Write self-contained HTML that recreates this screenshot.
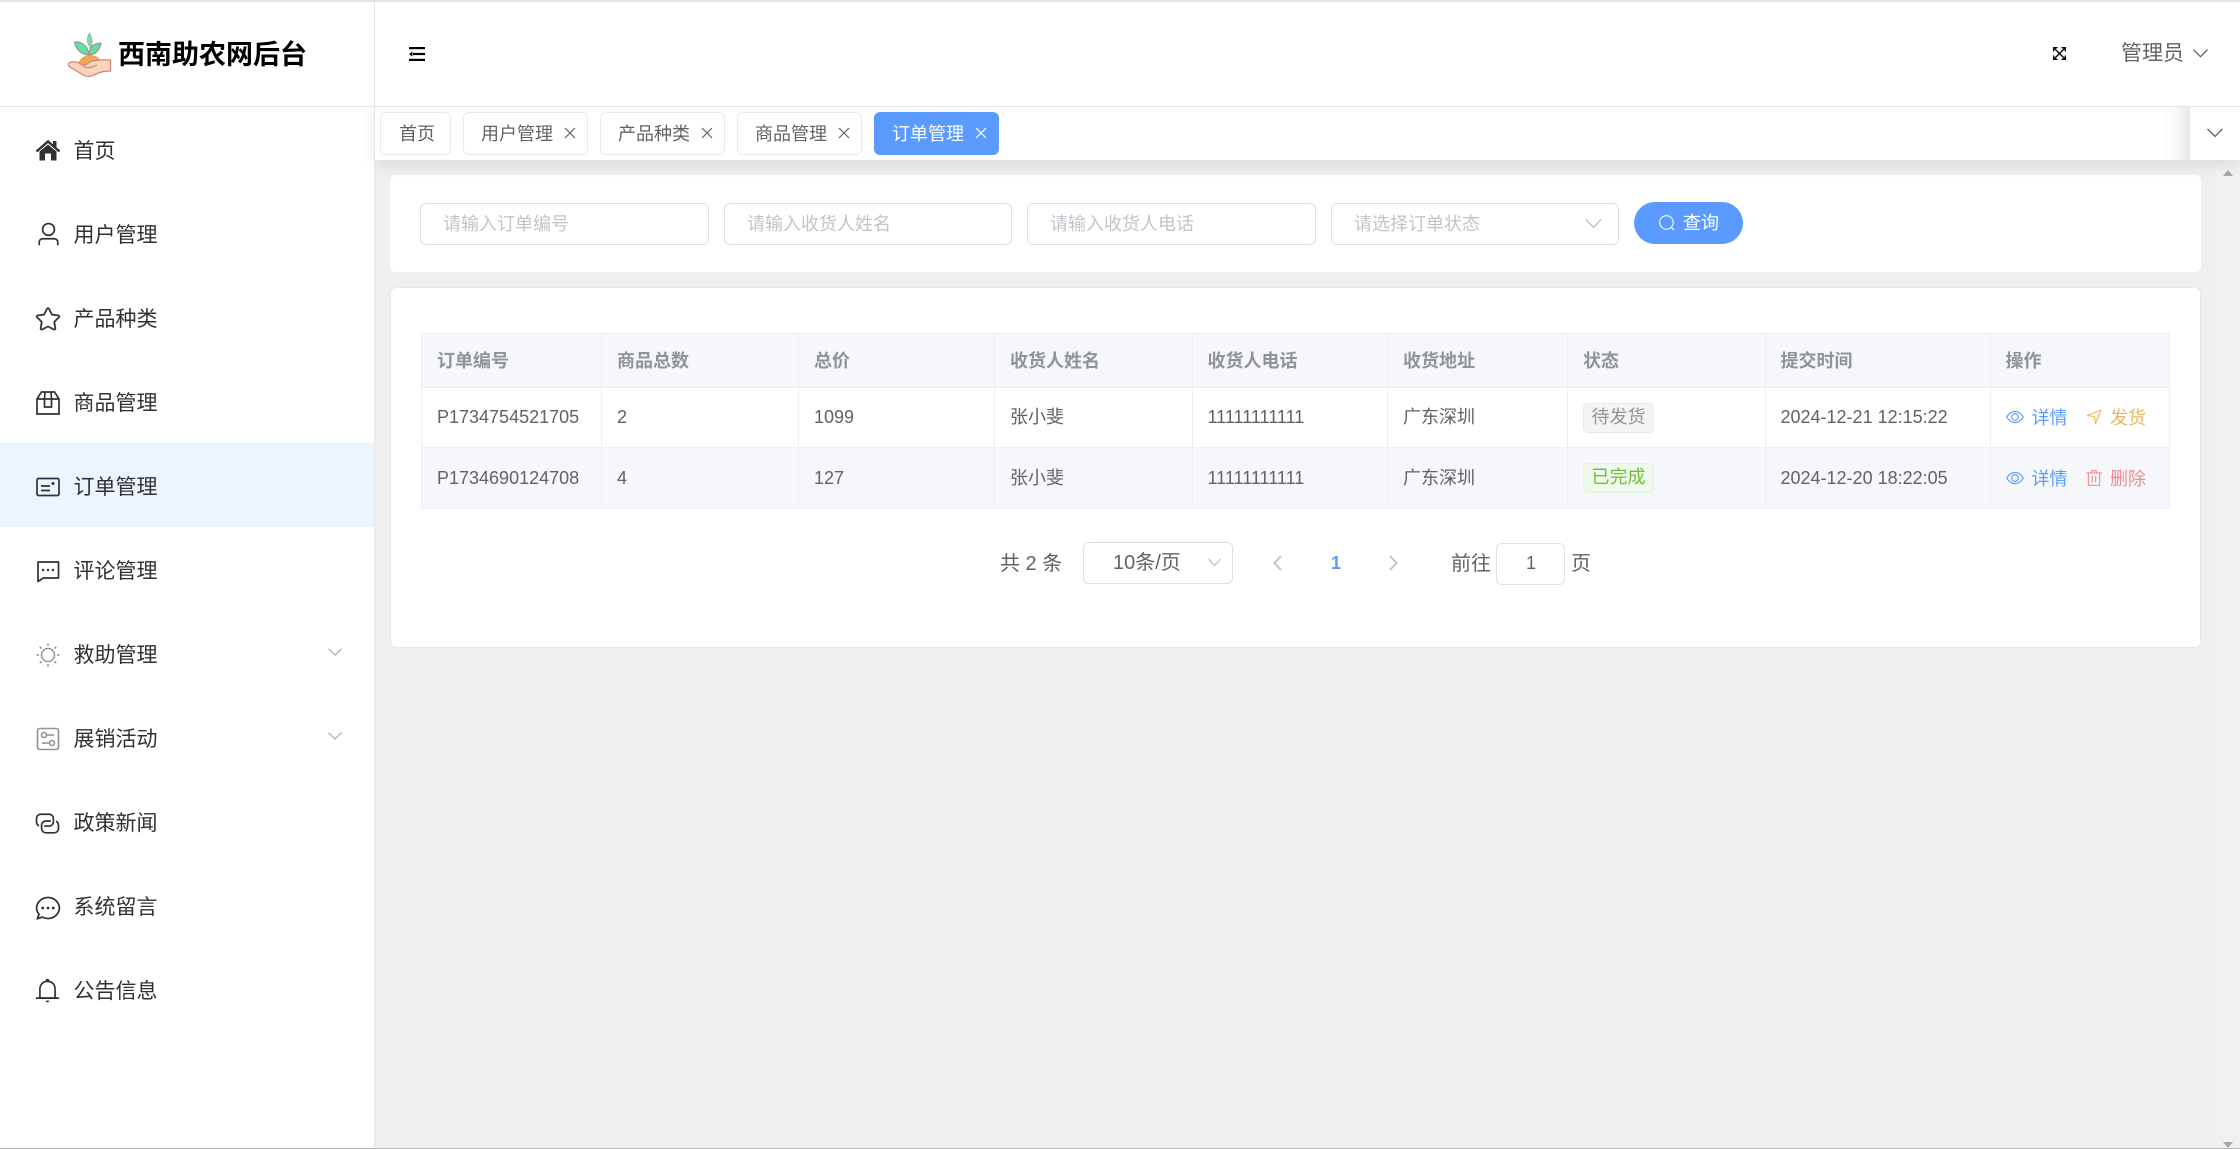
<!DOCTYPE html>
<html lang="zh-CN"><head><meta charset="utf-8"><title>西南助农网后台</title>
<style>
*{box-sizing:border-box;margin:0;padding:0}
html,body{width:2240px;height:1149px;overflow:hidden;background:#efefef}
body{position:relative;font-family:"Liberation Sans","Noto Sans CJK SC",sans-serif;color:#606266;font-size:18px}
.a{position:absolute}
.t{position:absolute;white-space:nowrap;line-height:30px;height:30px}
svg{position:absolute;display:block;overflow:visible}
.m{left:73.500px;font-size:21px;color:#303133}
.p{font-size:20px}
.tab{position:absolute;top:111.500px;height:43px;background:#fff;border:1px solid #e8eaef;border-radius:6px}
.tab span{position:absolute;left:17px;top:6px;line-height:30px;white-space:nowrap;color:#606266}
.inp{position:absolute;top:203px;height:42px;background:#fff;border:1px solid #dcdfe6;border-radius:6px}
.inp span{position:absolute;left:22px;top:5px;line-height:30px;color:#c0c4cc;white-space:nowrap}
table{position:absolute;left:421px;top:333px;width:1748px;border-collapse:collapse;table-layout:fixed;color:#606266}
td,th{border:1px solid #ebeef5;padding:0 0 0 15px;text-align:left;white-space:nowrap;font-size:18px;font-weight:400}
th{height:54px;background:#f5f7fa;color:#909399;font-weight:700;padding-bottom:2px}
.r1 td{height:60px;background:#fff}
.r2 td{height:61px;background:#f5f7fa}
.c{position:relative;top:-1.500px}
.tag{display:inline-block;height:30px;line-height:27px;padding:0 7.500px;border-radius:5px;border:1px solid;vertical-align:middle}
.tg{background:#f4f4f5;border-color:#e9e9eb;color:#909399}
.tk{background:#f0f9eb;border-color:#e1f3d8;color:#67c23a}
</style></head><body>

<!-- main white regions -->
<div class="a" style="left:0;top:2px;width:374px;height:1146px;background:#fff"></div>
<div class="a" style="left:374px;top:2px;width:1px;height:1146px;background:#e6e6e6;z-index:4"></div>
<div class="a" style="left:2216px;top:160px;width:24px;height:988px;background:#f1f1f1"></div>

<!-- scrollbar arrows -->
<div class="a" style="left:2223px;top:170px;width:0;height:0;border-left:5.500px solid transparent;border-right:5.500px solid transparent;border-bottom:6px solid #a8a8a8"></div>
<div class="a" style="left:2223px;top:1142px;width:0;height:0;border-left:5.500px solid transparent;border-right:5.500px solid transparent;border-top:6px solid #a8a8a8"></div>

<!-- search card -->
<div class="a" style="left:390px;top:175px;width:1811px;height:97px;background:#fff;border-radius:6px"></div>
<div class="inp" style="left:420px;width:289px"><span>请输入订单编号</span></div>
<div class="inp" style="left:724px;width:288px"><span>请输入收货人姓名</span></div>
<div class="inp" style="left:1027px;width:289px"><span>请输入收货人电话</span></div>
<div class="inp" style="left:1331px;width:288px"><span>请选择订单状态</span>
<svg style="left:253px;top:14px" width="17" height="12" viewBox="0 0 17 12"><path d="M1 1.500 8.500 9.500 16 1.500" fill="none" stroke="#c0c4cc" stroke-width="1.500"/></svg></div>
<div class="a" style="left:1634px;top:202px;width:109px;height:42px;border-radius:21px;background:#5b9bff"></div>
<svg style="left:1658px;top:214px" width="18" height="18" viewBox="0 0 1024 1024"><path fill="#fff" d="m795.904 750.720 124.992 124.928a32 32 0 0 1-45.248 45.248L750.656 795.904a416 416 0 1 1 45.248-45.248zM480 832a352 352 0 1 0 0-704 352 352 0 0 0 0 704"/></svg>
<div class="t" style="left:1683px;top:208px;color:#fff">查询</div>

<!-- table card -->
<div class="a" style="left:390px;top:287px;width:1811px;height:361px;background:#fff;border:1px solid #e4e7ed;border-radius:6px"></div>
<table>
<colgroup><col style="width:180px"><col style="width:197px"><col style="width:196px"><col style="width:197.500px"><col style="width:195.500px"><col style="width:180px"><col style="width:197.500px"><col style="width:225px"><col style="width:179.500px"></colgroup>
<tr><th>订单编号</th><th>商品总数</th><th>总价</th><th>收货人姓名</th><th>收货人电话</th><th>收货地址</th><th>状态</th><th>提交时间</th><th>操作</th></tr>
<tr class="r1"><td>P1734754521705</td><td>2</td><td>1099</td><td><span class="c">张小斐</span></td><td>11111111111</td><td><span class="c">广东深圳</span></td><td><span class="tag tg">待发货</span></td><td>2024-12-21 12:15:22</td><td></td></tr>
<tr class="r2"><td>P1734690124708</td><td>4</td><td>127</td><td><span class="c">张小斐</span></td><td>11111111111</td><td><span class="c">广东深圳</span></td><td><span class="tag tk">已完成</span></td><td>2024-12-20 18:22:05</td><td></td></tr>
</table>

<!-- actions -->
<svg style="left:2006px;top:408px" width="18" height="18" viewBox="0 0 1024 1024"><path fill="#5b9bff" d="M512 160c320 0 512 352 512 352S832 864 512 864 0 512 0 512s192-352 512-352m0 64c-225.280 0-384.128 208.064-436.800 288 52.608 79.872 211.456 288 436.800 288 225.280 0 384.128-208.064 436.800-288-52.608-79.872-211.456-288-436.800-288zm0 64a224 224 0 1 1 0 448 224 224 0 0 1 0-448m0 64a160.192 160.192 0 0 0-160 160c0 88.192 71.744 160 160 160s160-71.808 160-160-71.744-160-160-160"/></svg>
<div class="t" style="left:2031.500px;top:403px;color:#5b9bff">详情</div>
<svg style="left:2085px;top:408px" width="18" height="18" viewBox="0 0 1024 1024"><path fill="#ebb563" d="m249.600 417.088 319.744 43.072 39.168 310.272L845.120 178.880zm-129.024 47.168a32 32 0 0 1-7.680-61.440l777.792-311.040a32 32 0 0 1 41.600 41.600l-310.720 777.856a32 32 0 0 1-61.440-7.680L512 512z"/></svg>
<div class="t" style="left:2110px;top:403px;color:#ebb563">发货</div>
<svg style="left:2006px;top:469px" width="18" height="18" viewBox="0 0 1024 1024"><path fill="#5b9bff" d="M512 160c320 0 512 352 512 352S832 864 512 864 0 512 0 512s192-352 512-352m0 64c-225.280 0-384.128 208.064-436.800 288 52.608 79.872 211.456 288 436.800 288 225.280 0 384.128-208.064 436.800-288-52.608-79.872-211.456-288-436.800-288zm0 64a224 224 0 1 1 0 448 224 224 0 0 1 0-448m0 64a160.192 160.192 0 0 0-160 160c0 88.192 71.744 160 160 160s160-71.808 160-160-71.744-160-160-160"/></svg>
<div class="t" style="left:2031.500px;top:464px;color:#5b9bff">详情</div>
<svg style="left:2085px;top:469px" width="18" height="18" viewBox="0 0 1024 1024"><path fill="#f08c8c" d="M160 256H96a32 32 0 0 1 0-64h256V95.936a32 32 0 0 1 32-32h256a32 32 0 0 1 32 32V192h256a32 32 0 1 1 0 64h-64v672a32 32 0 0 1-32 32H192a32 32 0 0 1-32-32zm448-64v-64H416v64zM224 896h576V256H224zm192-128a32 32 0 0 1-32-32V416a32 32 0 0 1 64 0v320a32 32 0 0 1-32 32m192 0a32 32 0 0 1-32-32V416a32 32 0 0 1 64 0v320a32 32 0 0 1-32 32"/></svg>
<div class="t" style="left:2110px;top:464px;color:#f08c8c">删除</div>

<!-- pagination -->
<div class="t p" style="left:1000px;top:549px">共 2 条</div>
<div class="a" style="left:1083px;top:542px;width:150px;height:42px;border:1px solid #dcdfe6;border-radius:6px"></div>
<div class="t p" style="left:1113px;top:548px">10条/页</div>
<svg style="left:1208px;top:558px" width="13" height="9" viewBox="0 0 13 9"><path d="M.500 1 6.500 7.500 12.500 1" fill="none" stroke="#c0c4cc" stroke-width="1.300"/></svg>
<svg style="left:1273px;top:555px" width="9" height="16" viewBox="0 0 9 16"><path d="M8 1 1.500 8 8 15" fill="none" stroke="#c0c4cc" stroke-width="2"/></svg>
<div class="t" style="left:1331px;top:548px;color:#5b9bff;font-weight:700">1</div>
<svg style="left:1389px;top:555px" width="9" height="16" viewBox="0 0 9 16"><path d="M1 1 7.500 8 1 15" fill="none" stroke="#c0c4cc" stroke-width="2"/></svg>
<div class="t p" style="left:1451px;top:549px">前往</div>
<div class="a" style="left:1496px;top:543px;width:69px;height:42px;border:1px solid #dcdfe6;border-radius:6px"></div>
<div class="t" style="left:1526px;top:548px">1</div>
<div class="t p" style="left:1571px;top:549px">页</div>

<!-- tabs bar -->
<div class="a" style="left:375px;top:107px;width:1865px;height:53px;background:#fff;box-shadow:0 4px 16px rgba(0,0,0,.1);z-index:2"></div>
<div style="position:absolute;left:0;top:0;z-index:3">
<div class="tab" style="left:380px;width:71px"><span style="left:18px">首页</span></div>
<div class="tab" style="left:463px;width:125px"><span>用户管理</span><svg style="left:100px;top:14px" width="12" height="12" viewBox="0 0 12 12"><path d="M1 1 11 11M11 1 1 11" stroke="#606266" stroke-width="1.200"/></svg></div>
<div class="tab" style="left:600px;width:125px"><span>产品种类</span><svg style="left:100px;top:14px" width="12" height="12" viewBox="0 0 12 12"><path d="M1 1 11 11M11 1 1 11" stroke="#606266" stroke-width="1.200"/></svg></div>
<div class="tab" style="left:737px;width:125px"><span>商品管理</span><svg style="left:100px;top:14px" width="12" height="12" viewBox="0 0 12 12"><path d="M1 1 11 11M11 1 1 11" stroke="#606266" stroke-width="1.200"/></svg></div>
<div class="tab" style="left:874px;width:125px;background:#5b9bff;border-color:#5b9bff"><span style="color:#fff">订单管理</span><svg style="left:100px;top:14px" width="12" height="12" viewBox="0 0 12 12"><path d="M1 1 11 11M11 1 1 11" stroke="#fff" stroke-width="1.200"/></svg></div>
<div class="a" style="left:2160px;top:107px;width:30px;height:53px;background:linear-gradient(to right,rgba(232,232,232,0),rgba(232,232,232,.25) 50%,rgba(232,232,232,1))"></div>
<div class="a" style="left:2190px;top:107px;width:50px;height:53px;background:#fff"></div>
<svg style="left:2207px;top:128px" width="16" height="10" viewBox="0 0 16 10"><path d="M.500 1 8 8.500 15.500 1" fill="none" stroke="#606266" stroke-width="1.300"/></svg>
</div>

<!-- header -->
<div class="a" style="left:0;top:0;width:2240px;height:2px;background:#e3e3e3;z-index:5"></div>
<div class="a" style="left:375px;top:2px;width:1865px;height:104px;background:#fff;z-index:4"></div>
<div class="a" style="left:0;top:2px;width:374px;height:104px;background:#fff;z-index:4"></div>
<div class="a" style="left:0;top:106px;width:2240px;height:1px;background:#e6e6e6;z-index:5"></div>
<div style="position:absolute;left:0;top:0;z-index:6">
<svg style="left:0;top:0" width="130" height="90" viewBox="0 0 130 90">
<path d="M77 67C78 60 82 56 89 55 95 55 99 57 100 60L90 65 84 68z" fill="#f2a65a"/>
<path d="M68.500 63.500C71 61 76 61.500 79 63L84 66 90 62C94 60 100 59.500 110.500 60L110.500 71C104 71 100 72 96 74 92 76.500 88 77 84 75.500L70 67C68.500 66 68 64.500 68.500 63.500Z" fill="#fbd5b8" stroke="#c7857c" stroke-width="1.200"/>
<path d="M84 67C88 69 92 67 97 65" fill="none" stroke="#c7857c" stroke-width="1.200"/>
<path d="M90 47C86 42 87 37 89.500 33 92 38 94 42 90 50Z" fill="#7fd8b0" stroke="#9bb8a0" stroke-width=".8"/>
<path d="M89 55C82 55 76 50 74.500 42 82 41 88 46 89 55Z" fill="#62dfa5" stroke="#a9897c" stroke-width="1"/>
<path d="M89 55C96 55 100 49 101 43 94 43 89 47 89 55Z" fill="#62dfa5" stroke="#a9897c" stroke-width="1"/>
</svg>
<div class="t" style="left:118px;top:35.500px;height:38px;line-height:38px;font-size:27px;font-weight:700;color:#000">西南助农网后台</div>

<svg style="left:409px;top:47px" width="16" height="14" viewBox="0 0 16 14" fill="#000"><rect width="16" height="2.200"/><rect x="4" y="5.900" width="12" height="2.200"/><rect y="11.800" width="16" height="2.200"/><path d="M0 7 3.500 4.500V9.500z"/></svg>
<svg style="left:2053px;top:47px" width="13" height="13" viewBox="0 0 13 13" fill="none" stroke="#000" stroke-width="1.300"><path d="M1 1 12 12M12 1 1 12M.7 4.500V.7H4.500M8.500.7H12.300V4.500M.7 8.500V12.300H4.500M8.500 12.300H12.300V8.500"/></svg>
<div class="t" style="left:2121px;top:38.500px;font-size:21px;color:#606266">管理员</div>
<svg style="left:2193px;top:49px" width="15" height="9" viewBox="0 0 15 9"><path d="M.500 .7 7.500 7.700 14.500 .7" fill="none" stroke="#606266" stroke-width="1.300"/></svg>
</div>

<!-- sidebar menu -->
<div class="a" style="left:0;top:443px;width:374px;height:84px;background:#ecf5ff"></div>
<div class="t m" style="top:136.500px">首页</div>
<div class="t m" style="top:220.500px">用户管理</div>
<div class="t m" style="top:304.500px">产品种类</div>
<div class="t m" style="top:388.500px">商品管理</div>
<div class="t m" style="top:472.500px">订单管理</div>
<div class="t m" style="top:556.500px">评论管理</div>
<div class="t m" style="top:640.500px">救助管理</div>
<div class="t m" style="top:724.500px">展销活动</div>
<div class="t m" style="top:808.500px">政策新闻</div>
<div class="t m" style="top:892.500px">系统留言</div>
<div class="t m" style="top:976.500px">公告信息</div>

<svg style="left:0;top:0" width="70" height="1100" viewBox="0 0 70 1100">
<!-- home -->
<path d="M36.500 151.500 48 141.500 59.500 151.500" fill="none" stroke="#303133" stroke-width="2.400"/>
<path d="M39.500 151.500 48 144.500 56.500 151.500V160.500H51V153.500H45V160.500H39.500Z" fill="#303133"/>
<rect x="53" y="141" width="3.500" height="6" fill="#303133"/>
<!-- box -->
<g fill="none" stroke="#303133" stroke-width="1.700"><path d="M37 399 41.500 392H54.500L59 399V414H37Z"/><path d="M37 399H59"/><path d="M45 392 44.500 399V407H51.500V399L51 392"/></g>
<!-- postcard -->
<g fill="none" stroke="#303133" stroke-width="1.700"><rect x="37" y="478.500" width="22" height="17" rx="1.500"/><path d="M41 486H50M41 490.500H50"/></g><circle cx="53" cy="483.500" r="1.500" fill="#303133"/>
<!-- comment -->
<path d="M38 562H58.500V578H43.500L38 581.500Z" fill="none" stroke="#303133" stroke-width="1.700" stroke-linejoin="round"/>
<circle cx="43" cy="570" r="1.200" fill="#303133"/><circle cx="48" cy="570" r="1.200" fill="#303133"/><circle cx="53" cy="570" r="1.200" fill="#303133"/>
<!-- sun -->
<g fill="none" stroke="#909399" stroke-width="1.500"><circle cx="48" cy="655" r="6.500"/><path d="M48 643.500V646M48 664V666.500M36.500 655H39M57 655H59.500M39.800 646.800 41.600 648.600M54.400 661.400 56.200 663.200M56.200 646.800 54.400 648.600M41.600 661.400 39.800 663.200"/></g>
<!-- operation -->
<g fill="none" stroke="#909399" stroke-width="1.600"><rect x="37.500" y="728.500" width="21" height="21" rx="2.500"/><circle cx="44" cy="735" r="2.500"/><path d="M46.500 735H54"/><circle cx="52" cy="743" r="2.500"/><path d="M49.500 743H42"/></g>
</svg>
<svg style="left:34.600px;top:221.300px" width="27" height="27" viewBox="0 0 1024 1024"><path fill="#303133" d="M512 512a192 192 0 1 0 0-384 192 192 0 0 0 0 384m0 64a256 256 0 1 1 0-512 256 256 0 0 1 0 512m320 320v-96a96 96 0 0 0-96-96H288a96 96 0 0 0-96 96v96a32 32 0 1 1-64 0v-96a160 160 0 0 1 160-160h448a160 160 0 0 1 160 160v96a32 32 0 1 1-64 0"/></svg>
<svg style="left:34px;top:305px" width="28" height="28" viewBox="0 0 1024 1024"><path fill="#303133" d="m512 747.840 228.160 119.936a6.400 6.400 0 0 0 9.280-6.720l-43.520-254.080 184.512-179.904a6.400 6.400 0 0 0-3.520-10.880l-255.104-37.120L517.760 147.904a6.400 6.400 0 0 0-11.520 0L392.192 379.072l-255.104 37.120a6.400 6.400 0 0 0-3.520 10.880L318.080 606.976l-43.584 254.080a6.400 6.400 0 0 0 9.280 6.720zM313.600 924.480a70.400 70.400 0 0 1-102.144-74.240l37.888-220.928L88.960 472.960A70.400 70.400 0 0 1 128 352.896l221.760-32.256 99.200-200.960a70.400 70.400 0 0 1 126.208 0l99.200 200.960 221.824 32.256a70.400 70.400 0 0 1 39.040 120.064L774.720 629.376l37.888 220.928a70.400 70.400 0 0 1-102.144 74.240L512 820.096l-198.400 104.320z"/></svg>
<svg style="left:34.300px;top:809.600px" width="27" height="27" viewBox="0 0 1024 1024"><path fill="#303133" d="M640 384v64H448a128 128 0 0 0-128 128v128a128 128 0 0 0 128 128h320a128 128 0 0 0 128-128V576a128 128 0 0 0-64-110.848V394.880c74.560 26.368 128 97.472 128 181.056v128a192 192 0 0 1-192 192H448a192 192 0 0 1-192-192V576a192 192 0 0 1 192-192z"/><path fill="#303133" d="M384 640v-64h192a128 128 0 0 0 128-128V320a128 128 0 0 0-128-128H256a128 128 0 0 0-128 128v128a128 128 0 0 0 64 110.848v70.272A192.064 192.064 0 0 1 64 448V320a192 192 0 0 1 192-192h320a192 192 0 0 1 192 192v128a192 192 0 0 1-192 192z"/></svg>
<svg style="left:34.250px;top:894.400px" width="28" height="28" viewBox="0 0 1024 1024"><path fill="#303133" d="m174.720 855.680 135.296-45.120 23.680 11.840C388.096 849.536 448.576 864 512 864c211.840 0 384-166.784 384-352S723.840 160 512 160 128 326.784 128 512c0 69.120 24.960 139.264 70.848 199.232l22.080 28.800-46.272 115.584zm-45.248 82.560A32 32 0 0 1 89.600 896l58.368-145.920C94.720 680.320 64 596.864 64 512 64 299.904 256 96 512 96s448 203.904 448 416-192 416-448 416a461.056 461.056 0 0 1-206.912-48.384l-175.616 58.560z"/><path fill="#303133" d="M512 563.200a51.200 51.200 0 1 1 0-102.400 51.200 51.200 0 0 1 0 102.400m192 0a51.200 51.200 0 1 1 0-102.400 51.200 51.200 0 0 1 0 102.400m-384 0a51.200 51.200 0 1 1 0-102.400 51.200 51.200 0 0 1 0 102.400"/></svg>
<svg style="left:34.300px;top:977.300px" width="27" height="27" viewBox="0 0 1024 1024"><path fill="#303133" d="M512 64a64 64 0 0 1 64 64v64H448v-64a64 64 0 0 1 64-64"/><path fill="#303133" d="M256 768h512V448a256 256 0 1 0-512 0zm256-640a320 320 0 0 1 320 320v384H192V448a320 320 0 0 1 320-320"/><path fill="#303133" d="M96 768h832q32 0 32 32t-32 32H96q-32 0-32-32t32-32m352 128h128a64 64 0 0 1-128 0"/></svg>
<svg style="left:328px;top:648px" width="14" height="8" viewBox="0 0 14 8"><path d="M.500 .7 7 7 13.500 .7" fill="none" stroke="#a8abb2" stroke-width="1.200"/></svg>
<svg style="left:328px;top:732px" width="14" height="8" viewBox="0 0 14 8"><path d="M.500 .7 7 7 13.500 .7" fill="none" stroke="#a8abb2" stroke-width="1.200"/></svg>

<!-- bottom edge -->
<div class="a" style="left:0;top:1148px;width:2240px;height:1px;background:#b4b8bb;z-index:7"></div>
</body></html>
